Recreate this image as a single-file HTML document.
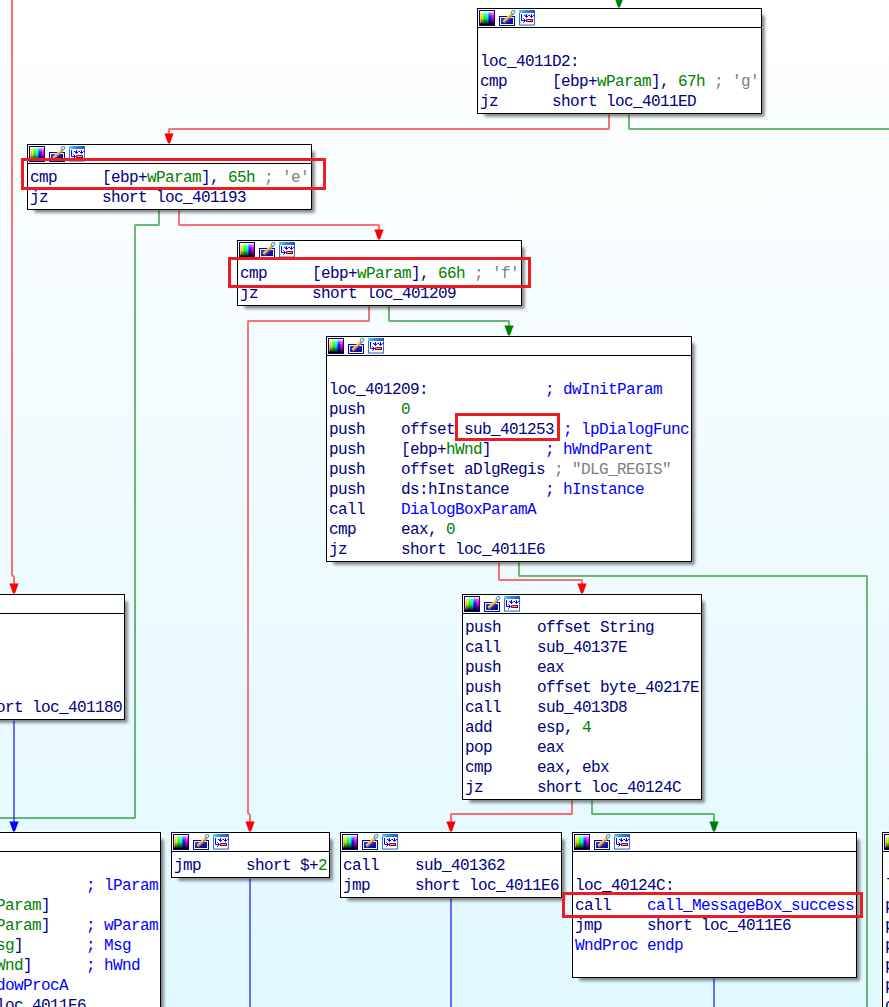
<!DOCTYPE html>
<html lang="en"><head><meta charset="utf-8"><title>IDA graph view</title>
<style>
html,body{margin:0;padding:0;}
body{width:889px;height:1007px;overflow:hidden;position:relative;
 background:linear-gradient(to bottom,#ffffff 0px,#e0f8ff 1007px);
 font-family:"Liberation Mono","DejaVu Sans Mono",monospace;}
.bx{position:absolute;box-sizing:border-box;border:1px solid #000;background:#fff;}
.hl{position:absolute;box-shadow:0 0 0 1px rgba(255,255,255,.6);}
.sh{position:absolute;box-shadow:2px 2px 3px rgba(0,0,0,.3),3px 3px 3px rgba(0,0,0,.27);}
.bx .tb{position:absolute;left:0;top:0;right:0;height:18px;border-bottom:1px solid #000;}
.bx .ic{position:absolute;left:1px;top:1px;width:56px;height:16px;display:block;}
.ln{position:absolute;left:2px;height:20px;line-height:20px;white-space:pre;
 font-size:16px;letter-spacing:-0.6px;color:#000080;}
.n{color:#000080;} .g{color:#008000;} .c{color:#808080;} .b{color:#0000ff;}
.rr{position:absolute;box-sizing:border-box;border:3px solid #ed1c24;}
#edges{position:absolute;left:0;top:0;}
</style></head><body>
<svg width="0" height="0" style="position:absolute"><defs><linearGradient id="hue" x1="0" y1="0" x2="1" y2="0"><stop offset="0" stop-color="#ffb060"/><stop offset="0.08" stop-color="#ffa000"/><stop offset="0.17" stop-color="#e0ff00"/><stop offset="0.33" stop-color="#00ff00"/><stop offset="0.52" stop-color="#00ffe8"/><stop offset="0.70" stop-color="#0000ff"/><stop offset="0.88" stop-color="#ff00e0"/><stop offset="1" stop-color="#e00050"/></linearGradient><linearGradient id="shade" x1="0" y1="0" x2="0" y2="1"><stop offset="0" stop-color="#ffffff" stop-opacity="1"/><stop offset="0.07" stop-color="#ffffff" stop-opacity="0.9"/><stop offset="0.14" stop-color="#ffffff" stop-opacity="0.5"/><stop offset="0.45" stop-color="#ffffff" stop-opacity="0"/><stop offset="0.5" stop-color="#000000" stop-opacity="0"/><stop offset="0.8" stop-color="#000000" stop-opacity="0.6"/><stop offset="0.96" stop-color="#000000" stop-opacity="1"/><stop offset="1" stop-color="#000000" stop-opacity="1"/></linearGradient><linearGradient id="frm" x1="0" y1="0" x2="1" y2="1"><stop offset="0" stop-color="#0000d0"/><stop offset="1" stop-color="#001850"/></linearGradient><linearGradient id="fil" x1="0" y1="0" x2="1" y2="1"><stop offset="0" stop-color="#2848d8"/><stop offset="1" stop-color="#000098"/></linearGradient><linearGradient id="tbar" x1="0" y1="0" x2="1" y2="0"><stop offset="0" stop-color="#58d8ff"/><stop offset="0.35" stop-color="#3098e8"/><stop offset="1" stop-color="#2850c8"/></linearGradient><linearGradient id="bar" x1="0" y1="0" x2="1" y2="1"><stop offset="0" stop-color="#d01070"/><stop offset="1" stop-color="#480028"/></linearGradient></defs></svg>
<svg id="edges" width="889" height="1007" viewBox="0 0 889 1007">
<polyline points="619,-20 619,8" fill="none" stroke="#008000" stroke-opacity="0.55" stroke-width="2" stroke-linejoin="bevel"/>
<polyline points="609,114 609,129 169,129 169,144" fill="none" stroke="#ff0000" stroke-opacity="0.55" stroke-width="2" stroke-linejoin="bevel"/>
<polyline points="629,114 629,129 900,129" fill="none" stroke="#008000" stroke-opacity="0.55" stroke-width="2" stroke-linejoin="bevel"/>
<polyline points="12,-5 12,575 14,577 14,594" fill="none" stroke="#ff0000" stroke-opacity="0.55" stroke-width="2" stroke-linejoin="bevel"/>
<polyline points="159,210 159,225 135,225 135,818 -5,818" fill="none" stroke="#008000" stroke-opacity="0.55" stroke-width="2" stroke-linejoin="bevel"/>
<polyline points="179,210 179,225 379,225 379,240" fill="none" stroke="#ff0000" stroke-opacity="0.55" stroke-width="2" stroke-linejoin="bevel"/>
<polyline points="369,306 369,321 248,321 248,813 250,815 250,832" fill="none" stroke="#ff0000" stroke-opacity="0.55" stroke-width="2" stroke-linejoin="bevel"/>
<polyline points="389,306 389,321 509,321 509,336" fill="none" stroke="#008000" stroke-opacity="0.55" stroke-width="2" stroke-linejoin="bevel"/>
<polyline points="499,562 499,580 582,580 582,594" fill="none" stroke="#ff0000" stroke-opacity="0.55" stroke-width="2" stroke-linejoin="bevel"/>
<polyline points="519,562 519,576 867,576 867,1012" fill="none" stroke="#008000" stroke-opacity="0.55" stroke-width="2" stroke-linejoin="bevel"/>
<polyline points="572,800 572,814 451,814 451,832" fill="none" stroke="#ff0000" stroke-opacity="0.55" stroke-width="2" stroke-linejoin="bevel"/>
<polyline points="592,800 592,814 714,814 714,832" fill="none" stroke="#008000" stroke-opacity="0.55" stroke-width="2" stroke-linejoin="bevel"/>
<polyline points="14,720 14,832" fill="none" stroke="#0000ff" stroke-opacity="0.55" stroke-width="2" stroke-linejoin="bevel"/>
<polyline points="250,878 250,1012" fill="none" stroke="#0000ff" stroke-opacity="0.55" stroke-width="2" stroke-linejoin="bevel"/>
<polyline points="451,898 451,1012" fill="none" stroke="#0000ff" stroke-opacity="0.55" stroke-width="2" stroke-linejoin="bevel"/>
<polyline points="714,978 714,1012" fill="none" stroke="#0000ff" stroke-opacity="0.55" stroke-width="2" stroke-linejoin="bevel"/>
<polygon points="614.4,-2.5 623.6,-2.5 619.6,8.5 618.4,8.5" fill="#008000"/>
<polygon points="164.4,133.5 173.6,133.5 169.6,144.5 168.4,144.5" fill="#ff0000"/>
<polygon points="9.4,583.5 18.6,583.5 14.6,594.5 13.4,594.5" fill="#ff0000"/>
<polygon points="374.4,229.5 383.6,229.5 379.6,240.5 378.4,240.5" fill="#ff0000"/>
<polygon points="245.4,821.5 254.6,821.5 250.6,832.5 249.4,832.5" fill="#ff0000"/>
<polygon points="504.4,325.5 513.6,325.5 509.6,336.5 508.4,336.5" fill="#008000"/>
<polygon points="577.4,583.5 586.6,583.5 582.6,594.5 581.4,594.5" fill="#ff0000"/>
<polygon points="446.4,821.5 455.6,821.5 451.6,832.5 450.4,832.5" fill="#ff0000"/>
<polygon points="709.4,821.5 718.6,821.5 714.6,832.5 713.4,832.5" fill="#008000"/>
<polygon points="9.4,821.5 18.6,821.5 14.6,832.5 13.4,832.5" fill="#0000ff"/>
</svg>
<div class="hl" style="left:477px;top:8px;width:285px;height:106px"></div>
<div class="hl" style="left:27px;top:144px;width:285px;height:66px"></div>
<div class="hl" style="left:237px;top:240px;width:285px;height:66px"></div>
<div class="hl" style="left:326px;top:336px;width:366px;height:226px"></div>
<div class="hl" style="left:462px;top:594px;width:240px;height:206px"></div>
<div class="hl" style="left:-97px;top:594px;width:222px;height:126px"></div>
<div class="hl" style="left:-133px;top:832px;width:294px;height:206px"></div>
<div class="hl" style="left:171px;top:832px;width:159px;height:46px"></div>
<div class="hl" style="left:340px;top:832px;width:222px;height:66px"></div>
<div class="hl" style="left:572px;top:832px;width:285px;height:146px"></div>
<div class="hl" style="left:882px;top:832px;width:285px;height:206px"></div>
<div class="sh" style="left:482px;top:13px;width:280px;height:101px"></div>
<div class="sh" style="left:32px;top:149px;width:280px;height:61px"></div>
<div class="sh" style="left:242px;top:245px;width:280px;height:61px"></div>
<div class="sh" style="left:331px;top:341px;width:361px;height:221px"></div>
<div class="sh" style="left:467px;top:599px;width:235px;height:201px"></div>
<div class="sh" style="left:-92px;top:599px;width:217px;height:121px"></div>
<div class="sh" style="left:-128px;top:837px;width:289px;height:201px"></div>
<div class="sh" style="left:176px;top:837px;width:154px;height:41px"></div>
<div class="sh" style="left:345px;top:837px;width:217px;height:61px"></div>
<div class="sh" style="left:577px;top:837px;width:280px;height:141px"></div>
<div class="sh" style="left:887px;top:837px;width:280px;height:201px"></div>
<div class="bx" style="left:477px;top:8px;width:285px;height:106px">
<div class="tb"><svg class="ic" width="56" height="16" viewBox="0 0 56 16"><rect x="0" y="0" width="16" height="16" fill="#000080"/><rect x="1" y="1" width="14" height="14" fill="url(#hue)"/><rect x="1" y="1" width="14" height="14" fill="url(#shade)"/><rect x="1" y="1" width="1" height="12" fill="#ffffff" fill-opacity="0.5"/><rect x="20.5" y="6.5" width="15" height="9" fill="#eaf8ff" stroke="url(#frm)" stroke-width="1"/><rect x="22" y="8" width="12" height="6" fill="url(#fil)"/><path d="M23.3 12.7 L24 10.6 L32.6 2.2 L33.7 3.3 L25 12 Z" fill="#ffc820"/><path d="M23.3 12.7 L25 12 L33.7 3.3 L34.8 4.4 L25.6 13.2 Z" fill="#ec8228"/><path d="M24.6 11.4 L33.4 2.8" fill="none" stroke="#ffffff" stroke-width="0.9" stroke-dasharray="0.9 0.6"/><path d="M23 13 L23.6 11.3 L24.9 12.5 Z" fill="#000000"/><ellipse cx="34.1" cy="2.2" rx="1.9" ry="1.4" transform="rotate(-45 34.1 2.2)" fill="#ffffff" stroke="#3c9cd0" stroke-width="1.1"/><rect x="40.5" y="0.5" width="15" height="14.5" fill="#ffffff" stroke="#3070d0" stroke-width="1"/><rect x="40" y="0" width="16" height="3" fill="url(#tbar)"/><rect x="41" y="15" width="14" height="0.8" fill="#3070d0" fill-opacity="0.25"/><path d="M42.5 4 V10.5 H46.5 M44.3 8.3 L46.5 10.5 L44.3 12.7" fill="none" stroke="#0000ff" stroke-width="1"/><path d="M45 5.5 H46.5 M49.5 5.5 H51 M54.2 5.5 H55.5" fill="none" stroke="#0000ff" stroke-width="1"/><path d="M47.5 4 V7.5 M45.7 5.6 L47.5 7.5 L49.3 5.6 M52.5 4 V7.5 M50.7 5.6 L52.5 7.5 L54.3 5.6" fill="none" stroke="#0000ff" stroke-width="1"/><rect x="47" y="9" width="7" height="3" rx="0.6" fill="url(#bar)"/><rect x="48" y="10" width="5" height="1" fill="#ffa030"/></svg></div>
<div class="ln" style="top:43px">loc_4011D2:</div>
<div class="ln" style="top:63px">cmp     [ebp+<span class="g">wParam</span>], <span class="g">67h</span><span class="c"> ; 'g'</span></div>
<div class="ln" style="top:83px">jz      short loc_4011ED</div>
</div>
<div class="bx" style="left:27px;top:144px;width:285px;height:66px">
<div class="tb"><svg class="ic" width="56" height="16" viewBox="0 0 56 16"><rect x="0" y="0" width="16" height="16" fill="#000080"/><rect x="1" y="1" width="14" height="14" fill="url(#hue)"/><rect x="1" y="1" width="14" height="14" fill="url(#shade)"/><rect x="1" y="1" width="1" height="12" fill="#ffffff" fill-opacity="0.5"/><rect x="20.5" y="6.5" width="15" height="9" fill="#eaf8ff" stroke="url(#frm)" stroke-width="1"/><rect x="22" y="8" width="12" height="6" fill="url(#fil)"/><path d="M23.3 12.7 L24 10.6 L32.6 2.2 L33.7 3.3 L25 12 Z" fill="#ffc820"/><path d="M23.3 12.7 L25 12 L33.7 3.3 L34.8 4.4 L25.6 13.2 Z" fill="#ec8228"/><path d="M24.6 11.4 L33.4 2.8" fill="none" stroke="#ffffff" stroke-width="0.9" stroke-dasharray="0.9 0.6"/><path d="M23 13 L23.6 11.3 L24.9 12.5 Z" fill="#000000"/><ellipse cx="34.1" cy="2.2" rx="1.9" ry="1.4" transform="rotate(-45 34.1 2.2)" fill="#ffffff" stroke="#3c9cd0" stroke-width="1.1"/><rect x="40.5" y="0.5" width="15" height="14.5" fill="#ffffff" stroke="#3070d0" stroke-width="1"/><rect x="40" y="0" width="16" height="3" fill="url(#tbar)"/><rect x="41" y="15" width="14" height="0.8" fill="#3070d0" fill-opacity="0.25"/><path d="M42.5 4 V10.5 H46.5 M44.3 8.3 L46.5 10.5 L44.3 12.7" fill="none" stroke="#0000ff" stroke-width="1"/><path d="M45 5.5 H46.5 M49.5 5.5 H51 M54.2 5.5 H55.5" fill="none" stroke="#0000ff" stroke-width="1"/><path d="M47.5 4 V7.5 M45.7 5.6 L47.5 7.5 L49.3 5.6 M52.5 4 V7.5 M50.7 5.6 L52.5 7.5 L54.3 5.6" fill="none" stroke="#0000ff" stroke-width="1"/><rect x="47" y="9" width="7" height="3" rx="0.6" fill="url(#bar)"/><rect x="48" y="10" width="5" height="1" fill="#ffa030"/></svg></div>
<div class="ln" style="top:23px">cmp     [ebp+<span class="g">wParam</span>], <span class="g">65h</span><span class="c"> ; 'e'</span></div>
<div class="ln" style="top:43px">jz      short loc_401193</div>
</div>
<div class="bx" style="left:237px;top:240px;width:285px;height:66px">
<div class="tb"><svg class="ic" width="56" height="16" viewBox="0 0 56 16"><rect x="0" y="0" width="16" height="16" fill="#000080"/><rect x="1" y="1" width="14" height="14" fill="url(#hue)"/><rect x="1" y="1" width="14" height="14" fill="url(#shade)"/><rect x="1" y="1" width="1" height="12" fill="#ffffff" fill-opacity="0.5"/><rect x="20.5" y="6.5" width="15" height="9" fill="#eaf8ff" stroke="url(#frm)" stroke-width="1"/><rect x="22" y="8" width="12" height="6" fill="url(#fil)"/><path d="M23.3 12.7 L24 10.6 L32.6 2.2 L33.7 3.3 L25 12 Z" fill="#ffc820"/><path d="M23.3 12.7 L25 12 L33.7 3.3 L34.8 4.4 L25.6 13.2 Z" fill="#ec8228"/><path d="M24.6 11.4 L33.4 2.8" fill="none" stroke="#ffffff" stroke-width="0.9" stroke-dasharray="0.9 0.6"/><path d="M23 13 L23.6 11.3 L24.9 12.5 Z" fill="#000000"/><ellipse cx="34.1" cy="2.2" rx="1.9" ry="1.4" transform="rotate(-45 34.1 2.2)" fill="#ffffff" stroke="#3c9cd0" stroke-width="1.1"/><rect x="40.5" y="0.5" width="15" height="14.5" fill="#ffffff" stroke="#3070d0" stroke-width="1"/><rect x="40" y="0" width="16" height="3" fill="url(#tbar)"/><rect x="41" y="15" width="14" height="0.8" fill="#3070d0" fill-opacity="0.25"/><path d="M42.5 4 V10.5 H46.5 M44.3 8.3 L46.5 10.5 L44.3 12.7" fill="none" stroke="#0000ff" stroke-width="1"/><path d="M45 5.5 H46.5 M49.5 5.5 H51 M54.2 5.5 H55.5" fill="none" stroke="#0000ff" stroke-width="1"/><path d="M47.5 4 V7.5 M45.7 5.6 L47.5 7.5 L49.3 5.6 M52.5 4 V7.5 M50.7 5.6 L52.5 7.5 L54.3 5.6" fill="none" stroke="#0000ff" stroke-width="1"/><rect x="47" y="9" width="7" height="3" rx="0.6" fill="url(#bar)"/><rect x="48" y="10" width="5" height="1" fill="#ffa030"/></svg></div>
<div class="ln" style="top:23px">cmp     [ebp+<span class="g">wParam</span>], <span class="g">66h</span><span class="c"> ; 'f'</span></div>
<div class="ln" style="top:43px">jz      short loc_401209</div>
</div>
<div class="bx" style="left:326px;top:336px;width:366px;height:226px">
<div class="tb"><svg class="ic" width="56" height="16" viewBox="0 0 56 16"><rect x="0" y="0" width="16" height="16" fill="#000080"/><rect x="1" y="1" width="14" height="14" fill="url(#hue)"/><rect x="1" y="1" width="14" height="14" fill="url(#shade)"/><rect x="1" y="1" width="1" height="12" fill="#ffffff" fill-opacity="0.5"/><rect x="20.5" y="6.5" width="15" height="9" fill="#eaf8ff" stroke="url(#frm)" stroke-width="1"/><rect x="22" y="8" width="12" height="6" fill="url(#fil)"/><path d="M23.3 12.7 L24 10.6 L32.6 2.2 L33.7 3.3 L25 12 Z" fill="#ffc820"/><path d="M23.3 12.7 L25 12 L33.7 3.3 L34.8 4.4 L25.6 13.2 Z" fill="#ec8228"/><path d="M24.6 11.4 L33.4 2.8" fill="none" stroke="#ffffff" stroke-width="0.9" stroke-dasharray="0.9 0.6"/><path d="M23 13 L23.6 11.3 L24.9 12.5 Z" fill="#000000"/><ellipse cx="34.1" cy="2.2" rx="1.9" ry="1.4" transform="rotate(-45 34.1 2.2)" fill="#ffffff" stroke="#3c9cd0" stroke-width="1.1"/><rect x="40.5" y="0.5" width="15" height="14.5" fill="#ffffff" stroke="#3070d0" stroke-width="1"/><rect x="40" y="0" width="16" height="3" fill="url(#tbar)"/><rect x="41" y="15" width="14" height="0.8" fill="#3070d0" fill-opacity="0.25"/><path d="M42.5 4 V10.5 H46.5 M44.3 8.3 L46.5 10.5 L44.3 12.7" fill="none" stroke="#0000ff" stroke-width="1"/><path d="M45 5.5 H46.5 M49.5 5.5 H51 M54.2 5.5 H55.5" fill="none" stroke="#0000ff" stroke-width="1"/><path d="M47.5 4 V7.5 M45.7 5.6 L47.5 7.5 L49.3 5.6 M52.5 4 V7.5 M50.7 5.6 L52.5 7.5 L54.3 5.6" fill="none" stroke="#0000ff" stroke-width="1"/><rect x="47" y="9" width="7" height="3" rx="0.6" fill="url(#bar)"/><rect x="48" y="10" width="5" height="1" fill="#ffa030"/></svg></div>
<div class="ln" style="top:43px">loc_401209:             <span class="b">; dwInitParam</span></div>
<div class="ln" style="top:63px">push    <span class="g">0</span></div>
<div class="ln" style="top:83px">push    offset sub_401253 <span class="b">; lpDialogFunc</span></div>
<div class="ln" style="top:103px">push    [ebp+<span class="g">hWnd</span>]      <span class="b">; hWndParent</span></div>
<div class="ln" style="top:123px">push    offset aDlgRegis <span class="c">; "DLG_REGIS"</span></div>
<div class="ln" style="top:143px">push    ds:hInstance    <span class="b">; hInstance</span></div>
<div class="ln" style="top:163px">call    <span class="b">DialogBoxParamA</span></div>
<div class="ln" style="top:183px">cmp     eax, <span class="g">0</span></div>
<div class="ln" style="top:203px">jz      short loc_4011E6</div>
</div>
<div class="bx" style="left:462px;top:594px;width:240px;height:206px">
<div class="tb"><svg class="ic" width="56" height="16" viewBox="0 0 56 16"><rect x="0" y="0" width="16" height="16" fill="#000080"/><rect x="1" y="1" width="14" height="14" fill="url(#hue)"/><rect x="1" y="1" width="14" height="14" fill="url(#shade)"/><rect x="1" y="1" width="1" height="12" fill="#ffffff" fill-opacity="0.5"/><rect x="20.5" y="6.5" width="15" height="9" fill="#eaf8ff" stroke="url(#frm)" stroke-width="1"/><rect x="22" y="8" width="12" height="6" fill="url(#fil)"/><path d="M23.3 12.7 L24 10.6 L32.6 2.2 L33.7 3.3 L25 12 Z" fill="#ffc820"/><path d="M23.3 12.7 L25 12 L33.7 3.3 L34.8 4.4 L25.6 13.2 Z" fill="#ec8228"/><path d="M24.6 11.4 L33.4 2.8" fill="none" stroke="#ffffff" stroke-width="0.9" stroke-dasharray="0.9 0.6"/><path d="M23 13 L23.6 11.3 L24.9 12.5 Z" fill="#000000"/><ellipse cx="34.1" cy="2.2" rx="1.9" ry="1.4" transform="rotate(-45 34.1 2.2)" fill="#ffffff" stroke="#3c9cd0" stroke-width="1.1"/><rect x="40.5" y="0.5" width="15" height="14.5" fill="#ffffff" stroke="#3070d0" stroke-width="1"/><rect x="40" y="0" width="16" height="3" fill="url(#tbar)"/><rect x="41" y="15" width="14" height="0.8" fill="#3070d0" fill-opacity="0.25"/><path d="M42.5 4 V10.5 H46.5 M44.3 8.3 L46.5 10.5 L44.3 12.7" fill="none" stroke="#0000ff" stroke-width="1"/><path d="M45 5.5 H46.5 M49.5 5.5 H51 M54.2 5.5 H55.5" fill="none" stroke="#0000ff" stroke-width="1"/><path d="M47.5 4 V7.5 M45.7 5.6 L47.5 7.5 L49.3 5.6 M52.5 4 V7.5 M50.7 5.6 L52.5 7.5 L54.3 5.6" fill="none" stroke="#0000ff" stroke-width="1"/><rect x="47" y="9" width="7" height="3" rx="0.6" fill="url(#bar)"/><rect x="48" y="10" width="5" height="1" fill="#ffa030"/></svg></div>
<div class="ln" style="top:23px">push    offset String</div>
<div class="ln" style="top:43px">call    sub_40137E</div>
<div class="ln" style="top:63px">push    eax</div>
<div class="ln" style="top:83px">push    offset byte_40217E</div>
<div class="ln" style="top:103px">call    sub_4013D8</div>
<div class="ln" style="top:123px">add     esp, <span class="g">4</span></div>
<div class="ln" style="top:143px">pop     eax</div>
<div class="ln" style="top:163px">cmp     eax, ebx</div>
<div class="ln" style="top:183px">jz      short loc_40124C</div>
</div>
<div class="bx" style="left:-97px;top:594px;width:222px;height:126px">
<div class="tb"><svg class="ic" width="56" height="16" viewBox="0 0 56 16"><rect x="0" y="0" width="16" height="16" fill="#000080"/><rect x="1" y="1" width="14" height="14" fill="url(#hue)"/><rect x="1" y="1" width="14" height="14" fill="url(#shade)"/><rect x="1" y="1" width="1" height="12" fill="#ffffff" fill-opacity="0.5"/><rect x="20.5" y="6.5" width="15" height="9" fill="#eaf8ff" stroke="url(#frm)" stroke-width="1"/><rect x="22" y="8" width="12" height="6" fill="url(#fil)"/><path d="M23.3 12.7 L24 10.6 L32.6 2.2 L33.7 3.3 L25 12 Z" fill="#ffc820"/><path d="M23.3 12.7 L25 12 L33.7 3.3 L34.8 4.4 L25.6 13.2 Z" fill="#ec8228"/><path d="M24.6 11.4 L33.4 2.8" fill="none" stroke="#ffffff" stroke-width="0.9" stroke-dasharray="0.9 0.6"/><path d="M23 13 L23.6 11.3 L24.9 12.5 Z" fill="#000000"/><ellipse cx="34.1" cy="2.2" rx="1.9" ry="1.4" transform="rotate(-45 34.1 2.2)" fill="#ffffff" stroke="#3c9cd0" stroke-width="1.1"/><rect x="40.5" y="0.5" width="15" height="14.5" fill="#ffffff" stroke="#3070d0" stroke-width="1"/><rect x="40" y="0" width="16" height="3" fill="url(#tbar)"/><rect x="41" y="15" width="14" height="0.8" fill="#3070d0" fill-opacity="0.25"/><path d="M42.5 4 V10.5 H46.5 M44.3 8.3 L46.5 10.5 L44.3 12.7" fill="none" stroke="#0000ff" stroke-width="1"/><path d="M45 5.5 H46.5 M49.5 5.5 H51 M54.2 5.5 H55.5" fill="none" stroke="#0000ff" stroke-width="1"/><path d="M47.5 4 V7.5 M45.7 5.6 L47.5 7.5 L49.3 5.6 M52.5 4 V7.5 M50.7 5.6 L52.5 7.5 L54.3 5.6" fill="none" stroke="#0000ff" stroke-width="1"/><rect x="47" y="9" width="7" height="3" rx="0.6" fill="url(#bar)"/><rect x="48" y="10" width="5" height="1" fill="#ffa030"/></svg></div>
<div class="ln" style="top:103px">jz      short loc_401180</div>
</div>
<div class="bx" style="left:-133px;top:832px;width:294px;height:206px">
<div class="tb"><svg class="ic" width="56" height="16" viewBox="0 0 56 16"><rect x="0" y="0" width="16" height="16" fill="#000080"/><rect x="1" y="1" width="14" height="14" fill="url(#hue)"/><rect x="1" y="1" width="14" height="14" fill="url(#shade)"/><rect x="1" y="1" width="1" height="12" fill="#ffffff" fill-opacity="0.5"/><rect x="20.5" y="6.5" width="15" height="9" fill="#eaf8ff" stroke="url(#frm)" stroke-width="1"/><rect x="22" y="8" width="12" height="6" fill="url(#fil)"/><path d="M23.3 12.7 L24 10.6 L32.6 2.2 L33.7 3.3 L25 12 Z" fill="#ffc820"/><path d="M23.3 12.7 L25 12 L33.7 3.3 L34.8 4.4 L25.6 13.2 Z" fill="#ec8228"/><path d="M24.6 11.4 L33.4 2.8" fill="none" stroke="#ffffff" stroke-width="0.9" stroke-dasharray="0.9 0.6"/><path d="M23 13 L23.6 11.3 L24.9 12.5 Z" fill="#000000"/><ellipse cx="34.1" cy="2.2" rx="1.9" ry="1.4" transform="rotate(-45 34.1 2.2)" fill="#ffffff" stroke="#3c9cd0" stroke-width="1.1"/><rect x="40.5" y="0.5" width="15" height="14.5" fill="#ffffff" stroke="#3070d0" stroke-width="1"/><rect x="40" y="0" width="16" height="3" fill="url(#tbar)"/><rect x="41" y="15" width="14" height="0.8" fill="#3070d0" fill-opacity="0.25"/><path d="M42.5 4 V10.5 H46.5 M44.3 8.3 L46.5 10.5 L44.3 12.7" fill="none" stroke="#0000ff" stroke-width="1"/><path d="M45 5.5 H46.5 M49.5 5.5 H51 M54.2 5.5 H55.5" fill="none" stroke="#0000ff" stroke-width="1"/><path d="M47.5 4 V7.5 M45.7 5.6 L47.5 7.5 L49.3 5.6 M52.5 4 V7.5 M50.7 5.6 L52.5 7.5 L54.3 5.6" fill="none" stroke="#0000ff" stroke-width="1"/><rect x="47" y="9" width="7" height="3" rx="0.6" fill="url(#bar)"/><rect x="48" y="10" width="5" height="1" fill="#ffa030"/></svg></div>
<div class="ln" style="top:43px">loc_401193:             <span class="b">; lParam</span></div>
<div class="ln" style="top:63px">push    [ebp+<span class="g">lParam</span>]</div>
<div class="ln" style="top:83px">push    [ebp+<span class="g">wParam</span>]    <span class="b">; wParam</span></div>
<div class="ln" style="top:103px">push    [ebp+<span class="g">Msg</span>]       <span class="b">; Msg</span></div>
<div class="ln" style="top:123px">push    [ebp+<span class="g">hWnd</span>]      <span class="b">; hWnd</span></div>
<div class="ln" style="top:143px">call    <span class="b">DefWindowProcA</span></div>
<div class="ln" style="top:163px">jmp     short loc_4011E6</div>
</div>
<div class="bx" style="left:171px;top:832px;width:159px;height:46px">
<div class="tb"><svg class="ic" width="56" height="16" viewBox="0 0 56 16"><rect x="0" y="0" width="16" height="16" fill="#000080"/><rect x="1" y="1" width="14" height="14" fill="url(#hue)"/><rect x="1" y="1" width="14" height="14" fill="url(#shade)"/><rect x="1" y="1" width="1" height="12" fill="#ffffff" fill-opacity="0.5"/><rect x="20.5" y="6.5" width="15" height="9" fill="#eaf8ff" stroke="url(#frm)" stroke-width="1"/><rect x="22" y="8" width="12" height="6" fill="url(#fil)"/><path d="M23.3 12.7 L24 10.6 L32.6 2.2 L33.7 3.3 L25 12 Z" fill="#ffc820"/><path d="M23.3 12.7 L25 12 L33.7 3.3 L34.8 4.4 L25.6 13.2 Z" fill="#ec8228"/><path d="M24.6 11.4 L33.4 2.8" fill="none" stroke="#ffffff" stroke-width="0.9" stroke-dasharray="0.9 0.6"/><path d="M23 13 L23.6 11.3 L24.9 12.5 Z" fill="#000000"/><ellipse cx="34.1" cy="2.2" rx="1.9" ry="1.4" transform="rotate(-45 34.1 2.2)" fill="#ffffff" stroke="#3c9cd0" stroke-width="1.1"/><rect x="40.5" y="0.5" width="15" height="14.5" fill="#ffffff" stroke="#3070d0" stroke-width="1"/><rect x="40" y="0" width="16" height="3" fill="url(#tbar)"/><rect x="41" y="15" width="14" height="0.8" fill="#3070d0" fill-opacity="0.25"/><path d="M42.5 4 V10.5 H46.5 M44.3 8.3 L46.5 10.5 L44.3 12.7" fill="none" stroke="#0000ff" stroke-width="1"/><path d="M45 5.5 H46.5 M49.5 5.5 H51 M54.2 5.5 H55.5" fill="none" stroke="#0000ff" stroke-width="1"/><path d="M47.5 4 V7.5 M45.7 5.6 L47.5 7.5 L49.3 5.6 M52.5 4 V7.5 M50.7 5.6 L52.5 7.5 L54.3 5.6" fill="none" stroke="#0000ff" stroke-width="1"/><rect x="47" y="9" width="7" height="3" rx="0.6" fill="url(#bar)"/><rect x="48" y="10" width="5" height="1" fill="#ffa030"/></svg></div>
<div class="ln" style="top:23px">jmp     short $+<span class="g">2</span></div>
</div>
<div class="bx" style="left:340px;top:832px;width:222px;height:66px">
<div class="tb"><svg class="ic" width="56" height="16" viewBox="0 0 56 16"><rect x="0" y="0" width="16" height="16" fill="#000080"/><rect x="1" y="1" width="14" height="14" fill="url(#hue)"/><rect x="1" y="1" width="14" height="14" fill="url(#shade)"/><rect x="1" y="1" width="1" height="12" fill="#ffffff" fill-opacity="0.5"/><rect x="20.5" y="6.5" width="15" height="9" fill="#eaf8ff" stroke="url(#frm)" stroke-width="1"/><rect x="22" y="8" width="12" height="6" fill="url(#fil)"/><path d="M23.3 12.7 L24 10.6 L32.6 2.2 L33.7 3.3 L25 12 Z" fill="#ffc820"/><path d="M23.3 12.7 L25 12 L33.7 3.3 L34.8 4.4 L25.6 13.2 Z" fill="#ec8228"/><path d="M24.6 11.4 L33.4 2.8" fill="none" stroke="#ffffff" stroke-width="0.9" stroke-dasharray="0.9 0.6"/><path d="M23 13 L23.6 11.3 L24.9 12.5 Z" fill="#000000"/><ellipse cx="34.1" cy="2.2" rx="1.9" ry="1.4" transform="rotate(-45 34.1 2.2)" fill="#ffffff" stroke="#3c9cd0" stroke-width="1.1"/><rect x="40.5" y="0.5" width="15" height="14.5" fill="#ffffff" stroke="#3070d0" stroke-width="1"/><rect x="40" y="0" width="16" height="3" fill="url(#tbar)"/><rect x="41" y="15" width="14" height="0.8" fill="#3070d0" fill-opacity="0.25"/><path d="M42.5 4 V10.5 H46.5 M44.3 8.3 L46.5 10.5 L44.3 12.7" fill="none" stroke="#0000ff" stroke-width="1"/><path d="M45 5.5 H46.5 M49.5 5.5 H51 M54.2 5.5 H55.5" fill="none" stroke="#0000ff" stroke-width="1"/><path d="M47.5 4 V7.5 M45.7 5.6 L47.5 7.5 L49.3 5.6 M52.5 4 V7.5 M50.7 5.6 L52.5 7.5 L54.3 5.6" fill="none" stroke="#0000ff" stroke-width="1"/><rect x="47" y="9" width="7" height="3" rx="0.6" fill="url(#bar)"/><rect x="48" y="10" width="5" height="1" fill="#ffa030"/></svg></div>
<div class="ln" style="top:23px">call    sub_401362</div>
<div class="ln" style="top:43px">jmp     short loc_4011E6</div>
</div>
<div class="bx" style="left:572px;top:832px;width:285px;height:146px">
<div class="tb"><svg class="ic" width="56" height="16" viewBox="0 0 56 16"><rect x="0" y="0" width="16" height="16" fill="#000080"/><rect x="1" y="1" width="14" height="14" fill="url(#hue)"/><rect x="1" y="1" width="14" height="14" fill="url(#shade)"/><rect x="1" y="1" width="1" height="12" fill="#ffffff" fill-opacity="0.5"/><rect x="20.5" y="6.5" width="15" height="9" fill="#eaf8ff" stroke="url(#frm)" stroke-width="1"/><rect x="22" y="8" width="12" height="6" fill="url(#fil)"/><path d="M23.3 12.7 L24 10.6 L32.6 2.2 L33.7 3.3 L25 12 Z" fill="#ffc820"/><path d="M23.3 12.7 L25 12 L33.7 3.3 L34.8 4.4 L25.6 13.2 Z" fill="#ec8228"/><path d="M24.6 11.4 L33.4 2.8" fill="none" stroke="#ffffff" stroke-width="0.9" stroke-dasharray="0.9 0.6"/><path d="M23 13 L23.6 11.3 L24.9 12.5 Z" fill="#000000"/><ellipse cx="34.1" cy="2.2" rx="1.9" ry="1.4" transform="rotate(-45 34.1 2.2)" fill="#ffffff" stroke="#3c9cd0" stroke-width="1.1"/><rect x="40.5" y="0.5" width="15" height="14.5" fill="#ffffff" stroke="#3070d0" stroke-width="1"/><rect x="40" y="0" width="16" height="3" fill="url(#tbar)"/><rect x="41" y="15" width="14" height="0.8" fill="#3070d0" fill-opacity="0.25"/><path d="M42.5 4 V10.5 H46.5 M44.3 8.3 L46.5 10.5 L44.3 12.7" fill="none" stroke="#0000ff" stroke-width="1"/><path d="M45 5.5 H46.5 M49.5 5.5 H51 M54.2 5.5 H55.5" fill="none" stroke="#0000ff" stroke-width="1"/><path d="M47.5 4 V7.5 M45.7 5.6 L47.5 7.5 L49.3 5.6 M52.5 4 V7.5 M50.7 5.6 L52.5 7.5 L54.3 5.6" fill="none" stroke="#0000ff" stroke-width="1"/><rect x="47" y="9" width="7" height="3" rx="0.6" fill="url(#bar)"/><rect x="48" y="10" width="5" height="1" fill="#ffa030"/></svg></div>
<div class="ln" style="top:43px">loc_40124C:</div>
<div class="ln" style="top:63px">call    <span class="b">call_MessageBox_success</span></div>
<div class="ln" style="top:83px">jmp     short loc_4011E6</div>
<div class="ln" style="top:103px"><span class="b">WndProc endp</span></div>
</div>
<div class="bx" style="left:882px;top:832px;width:285px;height:206px">
<div class="tb"><svg class="ic" width="56" height="16" viewBox="0 0 56 16"><rect x="0" y="0" width="16" height="16" fill="#000080"/><rect x="1" y="1" width="14" height="14" fill="url(#hue)"/><rect x="1" y="1" width="14" height="14" fill="url(#shade)"/><rect x="1" y="1" width="1" height="12" fill="#ffffff" fill-opacity="0.5"/><rect x="20.5" y="6.5" width="15" height="9" fill="#eaf8ff" stroke="url(#frm)" stroke-width="1"/><rect x="22" y="8" width="12" height="6" fill="url(#fil)"/><path d="M23.3 12.7 L24 10.6 L32.6 2.2 L33.7 3.3 L25 12 Z" fill="#ffc820"/><path d="M23.3 12.7 L25 12 L33.7 3.3 L34.8 4.4 L25.6 13.2 Z" fill="#ec8228"/><path d="M24.6 11.4 L33.4 2.8" fill="none" stroke="#ffffff" stroke-width="0.9" stroke-dasharray="0.9 0.6"/><path d="M23 13 L23.6 11.3 L24.9 12.5 Z" fill="#000000"/><ellipse cx="34.1" cy="2.2" rx="1.9" ry="1.4" transform="rotate(-45 34.1 2.2)" fill="#ffffff" stroke="#3c9cd0" stroke-width="1.1"/><rect x="40.5" y="0.5" width="15" height="14.5" fill="#ffffff" stroke="#3070d0" stroke-width="1"/><rect x="40" y="0" width="16" height="3" fill="url(#tbar)"/><rect x="41" y="15" width="14" height="0.8" fill="#3070d0" fill-opacity="0.25"/><path d="M42.5 4 V10.5 H46.5 M44.3 8.3 L46.5 10.5 L44.3 12.7" fill="none" stroke="#0000ff" stroke-width="1"/><path d="M45 5.5 H46.5 M49.5 5.5 H51 M54.2 5.5 H55.5" fill="none" stroke="#0000ff" stroke-width="1"/><path d="M47.5 4 V7.5 M45.7 5.6 L47.5 7.5 L49.3 5.6 M52.5 4 V7.5 M50.7 5.6 L52.5 7.5 L54.3 5.6" fill="none" stroke="#0000ff" stroke-width="1"/><rect x="47" y="9" width="7" height="3" rx="0.6" fill="url(#bar)"/><rect x="48" y="10" width="5" height="1" fill="#ffa030"/></svg></div>
<div class="ln" style="top:43px">loc_4011ED:</div>
<div class="ln" style="top:63px">push    <span class="g">0</span></div>
<div class="ln" style="top:83px">push    offset aAbout</div>
<div class="ln" style="top:103px">push    [ebp+<span class="g">hWnd</span>]</div>
<div class="ln" style="top:123px">push    offset aDlgAbout</div>
<div class="ln" style="top:143px">push    ds:hInstance</div>
<div class="ln" style="top:163px">call    <span class="b">DialogBoxParamA</span></div>
<div class="ln" style="top:183px">jmp     short loc_4011E6</div>
</div>
<div class="rr" style="left:21px;top:158px;width:305px;height:32px"></div>
<div class="rr" style="left:228px;top:257px;width:303px;height:31px"></div>
<div class="rr" style="left:455px;top:413px;width:105px;height:28px"></div>
<div class="rr" style="left:562px;top:892px;width:301px;height:26px"></div>
</body></html>
